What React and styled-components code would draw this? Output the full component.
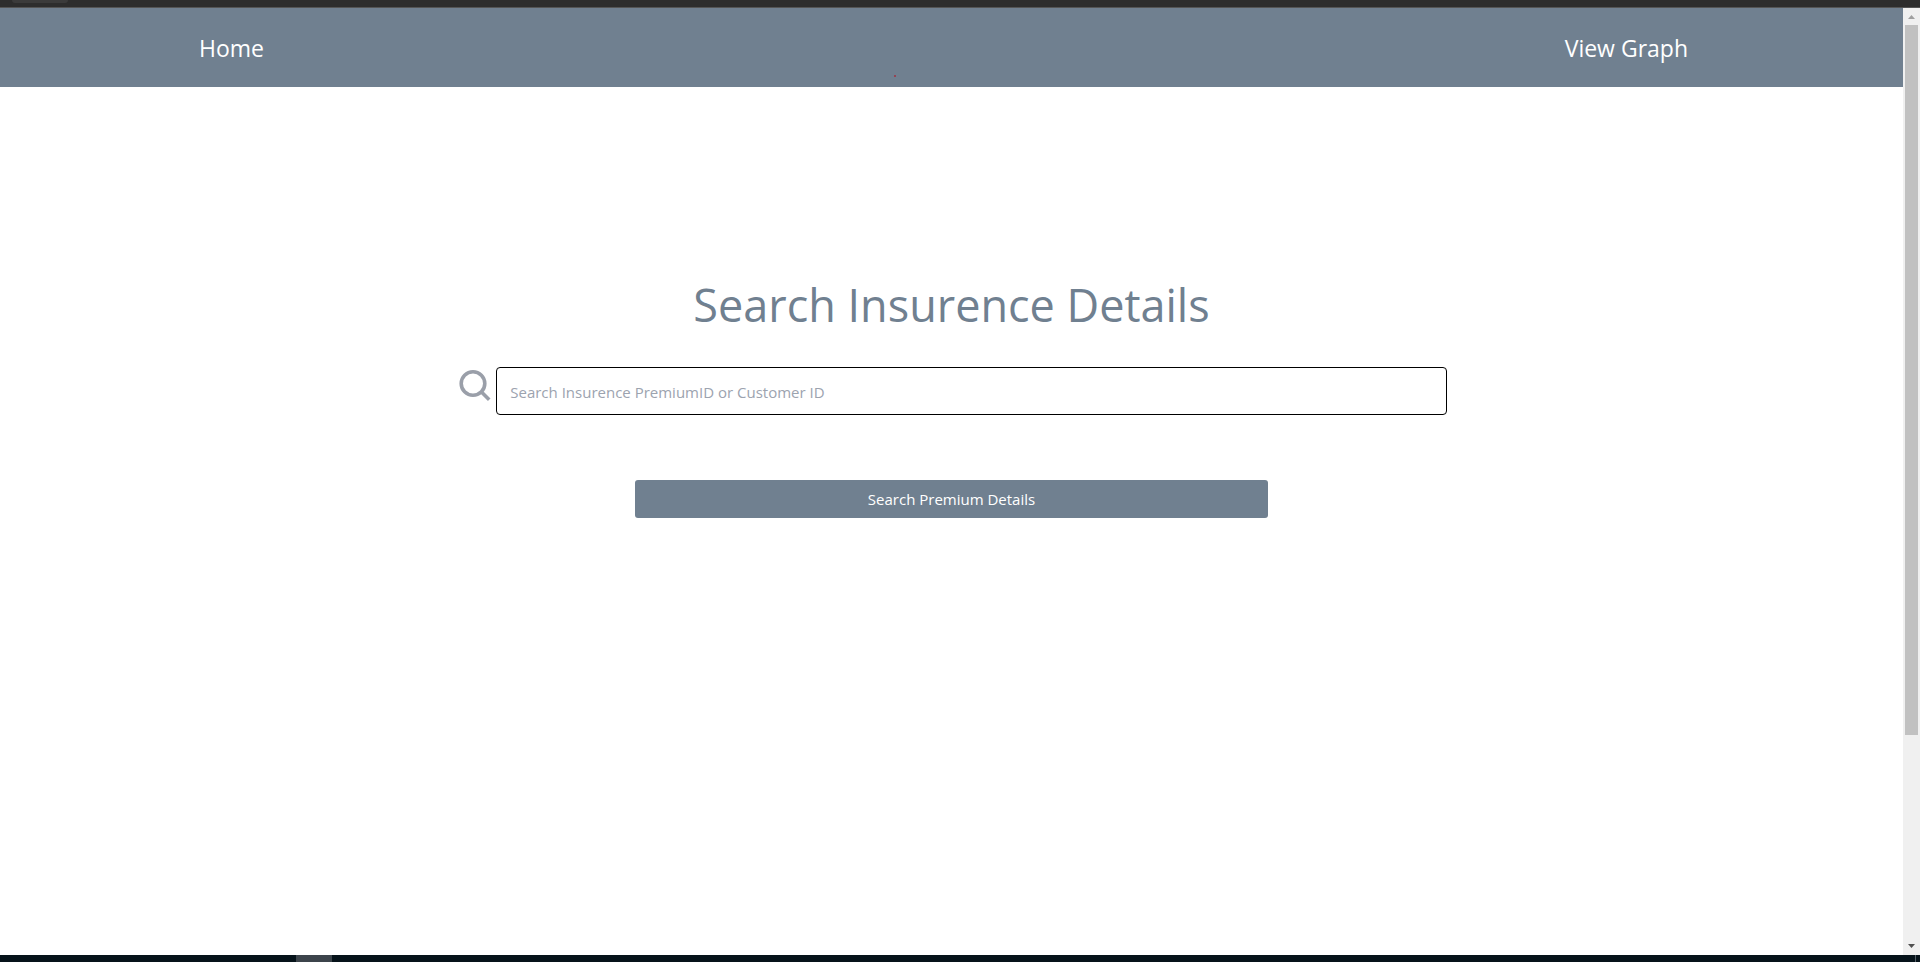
import React from "react";
import styled, { createGlobalStyle } from "styled-components";

const GlobalStyle = createGlobalStyle`
  *, *::before, *::after { box-sizing: border-box; }
  body {
    margin: 0;
    background: #fff;
    font-family: "Open Sans", "Noto Sans", sans-serif;
  }
`;

const Screen = styled.div`
  display: flex;
  flex-direction: column;
  min-height: 100vh;
`;

const BrowserEdge = styled.div`
  height: 8px;
  padding-left: 12px;
  background: #2d2d2d;
  border-bottom: 1px solid #555;
`;

const AddressPill = styled.div`
  width: 56px;
  height: 3px;
  background: #3b3b3b;
  border-radius: 0 0 12px 12px;
`;

const Viewport = styled.div`
  flex: 1;
  display: flex;
`;

const Page = styled.div`
  flex: 1;
  display: flex;
  flex-direction: column;
  min-width: 0;
`;

const Nav = styled.nav`
  position: relative;
  display: flex;
  align-items: center;
  justify-content: space-between;
  height: 79px;
  padding: 0 215px 0 199px;
  background: #708090;
`;

const NavLink = styled.a`
  color: #fff;
  font-size: 23px;
  line-height: 32px;
  text-decoration: none;
`;

const Marker = styled.span`
  position: absolute;
  left: 47%;
  bottom: 10px;
  width: 2px;
  height: 2px;
  border-radius: 50%;
  background: #a03040;
`;

const Main = styled.main`
  display: flex;
  flex-direction: column;
  align-items: center;
  padding-top: 184px;
`;

const Title = styled.h1`
  margin: 0;
  color: #708090;
  font-size: 45px;
  font-weight: 400;
  line-height: 68px;
`;

const SearchForm = styled.form`
  display: flex;
  flex-direction: column;
  align-items: center;
  width: 100%;
  margin-top: 28px;
`;

const SearchRow = styled.div`
  display: flex;
  justify-content: center;
  gap: 4px;
  width: 100%;
  padding-left: 2px;
`;

const SearchIcon = styled.svg`
  width: 34px;
  height: 34px;
  margin-top: 1px;
`;

const SearchInput = styled.input`
  width: 50%;
  height: 48px;
  padding: 2px 13px 0;
  border: 1px solid #000;
  border-radius: 4px;
  background: #fff;
  color: #212529;
  font: 15px/24px "Open Sans", "Noto Sans", sans-serif;
  &::placeholder { color: #9ca3af; opacity: 1; }
`;

const SubmitButton = styled.button`
  width: 33.3%;
  height: 38px;
  margin-top: 65px;
  padding: 0;
  border: 0;
  border-radius: 3px;
  background: #708090;
  color: #fff;
  font: 15px/24px "Open Sans", "Noto Sans", sans-serif;
`;

const ScrollTrack = styled.div`
  display: flex;
  flex-direction: column;
  align-items: center;
  width: 17px;
  background: #f0f0f0;
`;

const ScrollArrow = styled.svg`
  width: 17px;
  height: 17px;
`;

const ScrollLane = styled.div`
  flex: 1;
  display: flex;
  flex-direction: column;
  width: 13px;
`;

const ScrollThumb = styled.div`
  flex: 7;
  background: #c1c1c1;
`;

const ScrollRest = styled.div`
  flex: 2;
`;

const Taskbar = styled.div`
  display: flex;
  justify-content: space-between;
  height: 7px;
  padding: 0 4px 0 296px;
  background: #06131a;
`;

const ActiveTask = styled.div`
  width: 36px;
  background: #3c444b;
`;

const DesktopDivider = styled.div`
  width: 1px;
  background: #566067;
`;

export default function App() {
  return (
    <Screen>
      <GlobalStyle />
      <BrowserEdge><AddressPill /></BrowserEdge>
      <Viewport>
        <Page>
          <Nav>
            <NavLink href="#home">Home</NavLink>
            <Marker />
            <NavLink href="#graph">View Graph</NavLink>
          </Nav>
          <Main>
            <Title>Search Insurence Details</Title>
            <SearchForm onSubmit={(event) => event.preventDefault()}>
              <SearchRow>
                <SearchIcon viewBox="0 0 34 34" fill="none" stroke="#9a9fa9" strokeWidth="3.6" aria-hidden="true">
                  <circle cx="15" cy="15.5" r="11.8" />
                  <path d="M23.2 23.7 L31.2 31.7" />
                </SearchIcon>
                <SearchInput
                  type="text"
                  aria-label="Search Insurence PremiumID or Customer ID"
                  placeholder="Search Insurence PremiumID or Customer ID"
                />
              </SearchRow>
              <SubmitButton type="submit">Search Premium Details</SubmitButton>
            </SearchForm>
          </Main>
        </Page>
        <ScrollTrack aria-hidden="true">
          <ScrollArrow viewBox="0 0 17 17"><path d="M5 11 L8.5 7 L12 11 Z" fill="#a0a0a0" /></ScrollArrow>
          <ScrollLane><ScrollThumb /><ScrollRest /></ScrollLane>
          <ScrollArrow viewBox="0 0 17 17"><path d="M5 6 H12 L8.5 10 Z" fill="#505050" /></ScrollArrow>
        </ScrollTrack>
      </Viewport>
      <Taskbar><ActiveTask /><DesktopDivider /></Taskbar>
    </Screen>
  );
}
